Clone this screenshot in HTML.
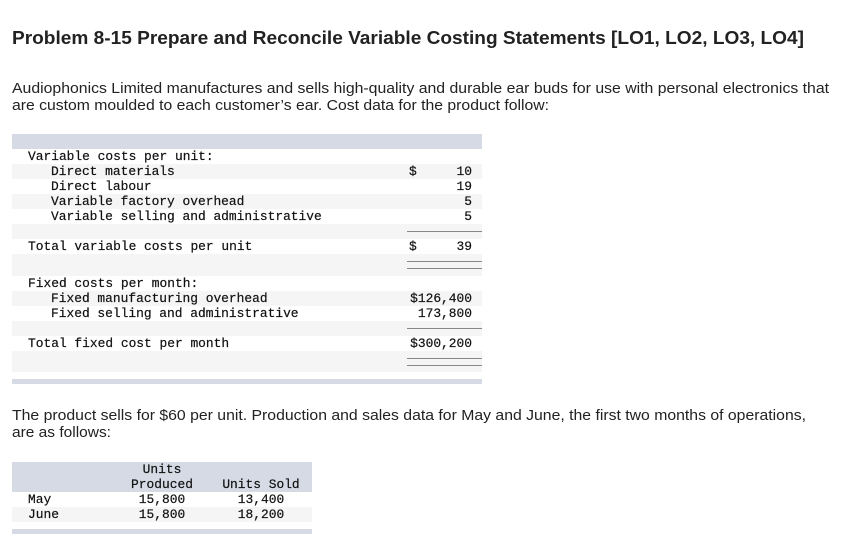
<!DOCTYPE html>
<html><head><meta charset="utf-8"><style>
body{margin:0;width:855px;height:543px;background:#fff;position:relative;overflow:hidden}
.b{position:absolute;left:12px;width:470px}
.h{background:#d5dae5}
.g{background:#f5f5f5}
.l{position:absolute;height:1px;background:#888;left:407px;width:75px}
.m{position:absolute;font:12.9px/15px "Liberation Mono","Courier New",monospace;color:#111;white-space:pre;-webkit-text-stroke:0.2px #111}
svg{position:absolute;left:0;top:0}
</style></head><body>
<svg width="855" height="543" font-family="Liberation Sans, Arial, sans-serif" fill="#222">
<text x="12" y="44" font-size="18" font-weight="bold" textLength="792" lengthAdjust="spacingAndGlyphs">Problem 8-15 Prepare and Reconcile Variable Costing Statements [LO1, LO2, LO3, LO4]</text>
<text x="12" y="93" font-size="14.5" textLength="817" lengthAdjust="spacingAndGlyphs">Audiophonics Limited manufactures and sells high-quality and durable ear buds for use with personal electronics that</text>
<text x="12" y="110" font-size="14.5" textLength="537" lengthAdjust="spacingAndGlyphs">are custom moulded to each customer’s ear. Cost data for the product follow:</text>
<text x="12" y="420" font-size="14.5" textLength="794" lengthAdjust="spacingAndGlyphs">The product sells for $60 per unit. Production and sales data for May and June, the first two months of operations,</text>
<text x="12" y="437" font-size="14.5" textLength="99" lengthAdjust="spacingAndGlyphs">are as follows:</text>
</svg>
<div class="b h" style="top:134px;height:15px"></div>
<div class="b g" style="top:164px;height:15px"></div>
<div class="b g" style="top:194px;height:15px"></div>
<div class="b g" style="top:224px;height:15px"></div>
<div class="b g" style="top:254px;height:22px"></div>
<div class="b g" style="top:291px;height:15px"></div>
<div class="b g" style="top:321px;height:15px"></div>
<div class="b g" style="top:351px;height:21px"></div>
<div class="b h" style="top:379px;height:5px"></div>
<div class="l" style="top:231px"></div>
<div class="l" style="top:261px"></div><div class="l" style="top:268px"></div>
<div class="l" style="top:328px"></div>
<div class="l" style="top:358px"></div><div class="l" style="top:365px"></div>

<div class="m" style="left:28px;top:149px">Variable costs per unit:</div>
<div class="m" style="left:51px;top:164px">Direct materials</div>
<div class="m" style="left:51px;top:179px">Direct labour</div>
<div class="m" style="left:51px;top:194px">Variable factory overhead</div>
<div class="m" style="left:51px;top:209px">Variable selling and administrative</div>
<div class="m" style="left:28px;top:239px">Total variable costs per unit</div>
<div class="m" style="left:409px;top:164px">$</div>
<div class="m" style="left:409px;top:239px">$</div>
<div class="m" style="top:164px;left:432px;width:40px;text-align:right">10</div>
<div class="m" style="top:179px;left:432px;width:40px;text-align:right">19</div>
<div class="m" style="top:194px;left:432px;width:40px;text-align:right">5</div>
<div class="m" style="top:209px;left:432px;width:40px;text-align:right">5</div>
<div class="m" style="top:239px;left:432px;width:40px;text-align:right">39</div>

<div class="m" style="left:28px;top:276px">Fixed costs per month:</div>
<div class="m" style="left:51px;top:291px">Fixed manufacturing overhead</div>
<div class="m" style="left:51px;top:306px">Fixed selling and administrative</div>
<div class="m" style="left:28px;top:336px">Total fixed cost per month</div>
<div class="m" style="top:291px;left:402px;width:70px;text-align:right">$126,400</div>
<div class="m" style="top:306px;left:402px;width:70px;text-align:right">173,800</div>
<div class="m" style="top:336px;left:402px;width:70px;text-align:right">$300,200</div>

<div class="b h" style="top:462px;height:30px;width:300px"></div>
<div class="b g" style="top:507px;height:15px;width:300px"></div>
<div class="b h" style="top:529px;height:5px;width:300px"></div>
<div class="m" style="left:28px;top:492px">May</div>
<div class="m" style="left:28px;top:507px">June</div>
<div class="m" style="left:120px;top:462px;width:84px;text-align:center">Units
Produced
15,800
15,800</div>
<div class="m" style="left:216px;top:477px;width:90px;text-align:center">Units Sold
13,400
18,200</div>
</body></html>
